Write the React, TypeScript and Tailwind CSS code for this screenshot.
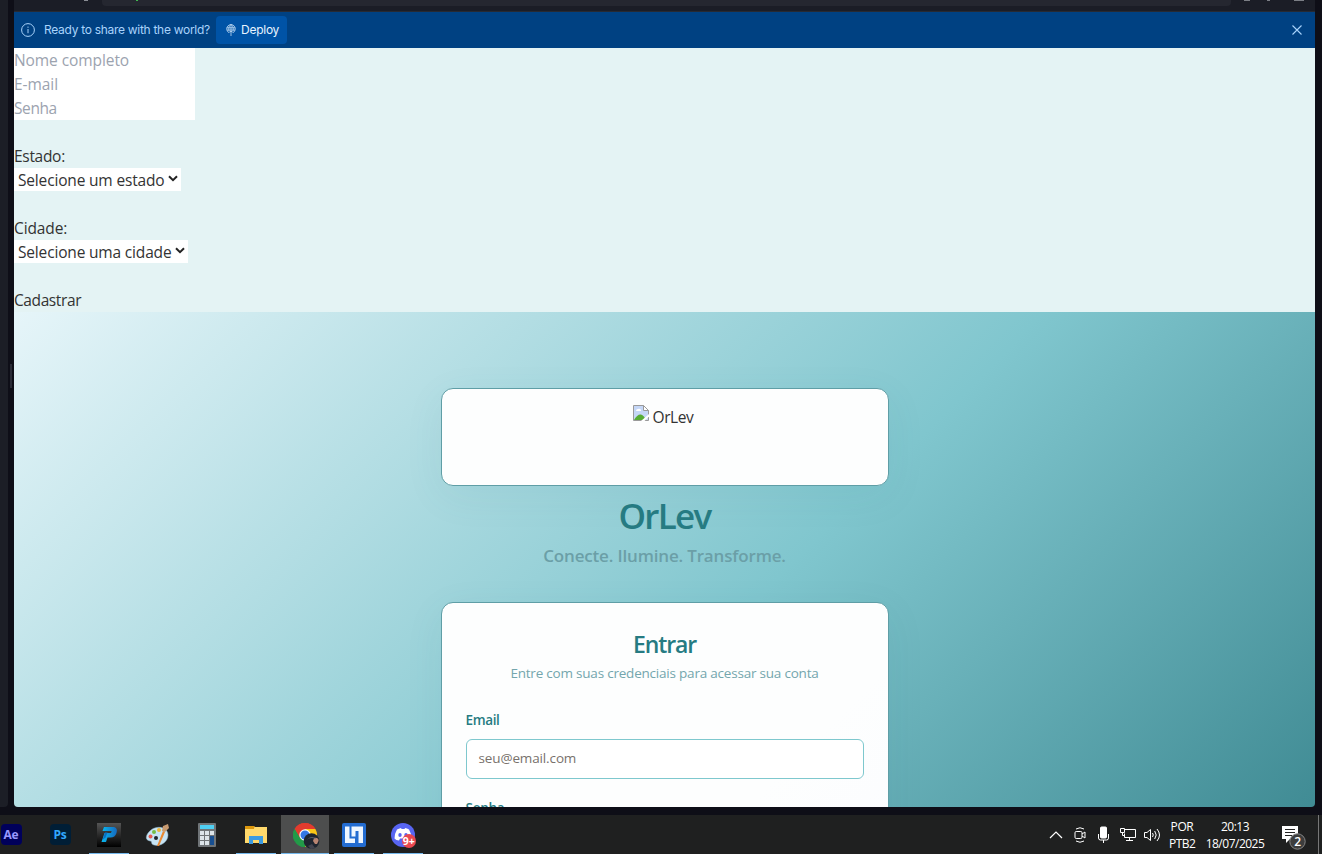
import React from "react";

const segoe = "font-['Open_Sans','Noto_Sans',sans-serif]";

function ShareBanner() {
  return (
    <div className="flex h-9 shrink-0 items-center bg-[#004182] pl-[7px] pr-[13px] font-['Inter',sans-serif] text-[12px]">
      <svg width="14" height="14" viewBox="0 0 14 14" fill="none" stroke="#a9d3fb">
        <circle cx="7" cy="7" r="6.4" />
        <path d="M7 6v4.200M7 3.600v1.200" />
      </svg>
      <span className="ml-[9px] w-[172px] whitespace-nowrap tracking-[-0.29px] text-[#a9d3fb]">Ready to share with the world?</span>
      <button className="flex h-7 w-[71px] items-center rounded bg-[#0053a6] pl-[10px] text-[#e8f3ff]">
        <svg width="10" height="12" viewBox="0 0 10 12" fill="none" stroke="#cfe5fa" strokeWidth="0.75">
          <path d="M3 8.700A4.300 4.300 0 1 1 7 8.700M3.300 7.500C2 4.500 3.400.8 5 .7c1.600.1 3 3.800 1.700 6.800M.9 3.800h8.200M1 6h8M5 .7V12M3.600 8.500 5 7l1.400 1.500" />
        </svg>
        <span className="ml-[5px] tracking-[-0.25px]">Deploy</span>
      </button>
      <svg className="ml-auto" width="10" height="10" viewBox="0 0 10 10" stroke="#a9d3fb" strokeWidth="1.1">
        <path d="m.5.5 9 9m0-9-9 9" />
      </svg>
    </div>
  );
}

function SelectBox({ label, className }: { label: string; className: string }) {
  return (
    <div className={"flex h-[23px] items-center bg-white pl-1 pt-px " + className}>
      <span className="whitespace-nowrap">{label}</span>
      <svg className="mb-[3px] ml-auto mr-[3px] shrink-0" width="10" height="7" viewBox="0 0 10 7" fill="none" stroke="#222" strokeWidth="2">
        <path d="m1 1.200 4 4 4-4" />
      </svg>
    </div>
  );
}

function RegisterForm() {
  return (
    <div className="h-[264px] shrink-0 bg-[#e4f3f4] text-[15.5px] leading-6 text-[#333333]">
      <div className="h-[72px] w-[181px] bg-white text-[#9ca3af]">
        <div className="tracking-[-0.08px]">Nome completo</div>
        <div className="tracking-[-0.05px]">E-mail</div>
        <div className="tracking-[-0.4px]">Senha</div>
      </div>
      <div className="mt-6 tracking-[-0.3px]">Estado:</div>
      <SelectBox label="Selecione um estado" className="w-[167px] tracking-[-0.17px]" />
      <div className="mt-[25px] tracking-[-0.1px]">Cidade:</div>
      <SelectBox label="Selecione uma cidade" className="w-[174px] tracking-[-0.17px]" />
      <div className="mt-[25px] tracking-[-0.4px]">Cadastrar</div>
    </div>
  );
}

function BrokenImage() {
  return (
    <svg className="mt-[16px]" width="16" height="16" viewBox="0 0 16 16">
      <path d="M.5.5h10l5 5v10H.5z" fill="#c5d7f7" stroke="#9a9a9a" />
      <path d="M10.500.5v5h5z" fill="#fff" stroke="#9a9a9a" />
      <path d="M3 6a2 2 0 0 1 2-2 2 2 0 0 1 3 2z" fill="#fff" />
      <path d="M1 15c2-4 5-6 7-5.500s4 3 5 5.500z" fill="#57ad35" />
      <path d="m8 16 8-7v2.500L11.500 16z" fill="#fff" />
    </svg>
  );
}

function LoginSection() {
  return (
    <div className="min-h-0 flex-1 overflow-hidden">
      <div className="flex h-[760px] flex-col items-center bg-[linear-gradient(135deg,#e6f5f9_0%,#80c6ce_50%,#2a7780_100%)] pt-[76px]">
        <div className="flex h-[98px] w-[448px] shrink-0 justify-center rounded-xl border border-[#5f9ea6] bg-[#fdfefe] shadow-[0_10px_40px_rgba(42,120,130,0.07)]">
          <BrokenImage />
          <span className="ml-1 mt-4 mr-[3px] text-[15.5px] leading-6 tracking-[-0.4px] text-[#333333]">OrLev</span>
        </div>
        <h1 className="mt-[10px] text-[35px] font-semibold leading-10 tracking-[-1.7px] text-[#267b82]">OrLev</h1>
        <p className="mt-[6px] text-[17px] font-semibold leading-7 tracking-[-0.17px] text-[#6b9fa7]">Conecte. Ilumine. Transforme.</p>
        <div className="mt-[32px] flex h-[400px] w-[448px] shrink-0 flex-col rounded-xl border border-[#5f9ea6] bg-[linear-gradient(135deg,#fdfefe_0%,#fdfefe_60%,#fafbff_100%)] px-6 pt-[25px] shadow-[0_10px_40px_rgba(42,120,130,0.07)]">
          <h2 className="text-center text-[23px] font-semibold leading-8 tracking-[-1.1px] text-[#267b82]">Entrar</h2>
          <p className="mt-[3px] text-center text-[13.5px] leading-5 tracking-[-0.21px] text-[#74a6ad]">Entre com suas credenciais para acessar sua conta</p>
          <div className="mt-[27px] text-[13.5px] font-semibold leading-5 tracking-[-0.35px] text-[#267b82]">Email</div>
          <div className="mt-[9px] flex h-10 shrink-0 items-center rounded-md border border-[#7ec8ce] bg-white px-3 pb-px text-[13.5px] tracking-[-0.13px] text-[#78716c]">seu@email.com</div>
          <div className="mt-[19px] text-[13.5px] font-semibold leading-5 tracking-[-0.25px] text-[#267b82]">Senha</div>
        </div>
      </div>
    </div>
  );
}

function Slot({ children, className = "" }: { children: React.ReactNode; className?: string }) {
  return <div className={"flex h-[39px] shrink-0 flex-col items-center " + className}>{children}</div>;
}

function Underline() {
  return <div className="mt-auto h-px w-10 bg-[#76b9ed]" />;
}

function TaskIcons() {
  return (
    <div className="flex">
      <Slot className="w-[22px] pt-[9px]">
        <div className="flex h-[21px] w-[21px] items-center justify-center rounded bg-[#00005b] text-[12px] font-bold tracking-[-0.3px] text-[#9999ff]">Ae</div>
      </Slot>
      <Slot className="ml-[27px] w-[22px] pt-[9px]">
        <div className="flex h-[21px] w-[21px] items-center justify-center rounded bg-[#001e36] text-[12px] font-bold tracking-[-0.3px] text-[#31a8ff]">Ps</div>
      </Slot>
      <Slot className="ml-[18px] w-10 pt-2">
        <svg width="24" height="24" viewBox="0 0 24 24">
          <defs>
            <linearGradient id="tile" x2="0" y2="1"><stop stopColor="#555" /><stop offset="1" /></linearGradient>
            <linearGradient id="pblue"><stop stopColor="#08b9ef" /><stop offset="1" stopColor="#166ac0" /></linearGradient>
          </defs>
          <path d="M0 0h24v24H0z" fill="url(#tile)" />
          <path d="M7 4h10q4 1 2.500 6-1.500 4.500-6 4.500h-3L9 19H4.500l3-9H14l.7-2H5.500z" fill="url(#pblue)" />
          <path d="m8 9.500-2.500 7.500 3-2.500 2-5z" fill="#0a6fc4" />
        </svg>
        <Underline />
      </Slot>
      <Slot className="ml-[16px] w-[26px] pt-2">
        <svg width="26" height="24" viewBox="0 0 26 24">
          <path d="M6 7C12 2 23 4 23 12c0 7-8 12-14 10-4-1-1-4-4-4-6-1-4-7 1-11z" fill="#c7e4f4" stroke="#90b6ca" strokeWidth=".5" />
          <circle cx="5.500" cy="13.500" r="2" fill="#e65b50" />
          <circle cx="9" cy="9" r="2" fill="#75bd45" />
          <circle cx="14" cy="7" r="2" fill="#eeb839" />
          <circle cx="11" cy="15" r="2" fill="#20252b" />
          <path d="m12 23 6-15 2 1-6 14z" fill="#e98932" />
          <path d="m17 8 1-5 5-2 1 4-4 4z" fill="#c79a70" />
        </svg>
      </Slot>
      <Slot className="ml-[26px] w-[20px] pt-2">
        <svg width="18" height="24" viewBox="0 0 18 24">
          <rect width="18" height="24" rx="1" fill="#6f7477" />
          <path d="M2 2h14v4H2z" fill="#4fd0f4" />
          <path d="M2 8h4v4H2zm5 0h4v4H7zm5 0h4v4h-4zM2 13h4v4H2zm5 0h4v4H7zM2 18h4v4H2zm5 0h4v4H7z" fill="#dce4e9" />
          <path d="M12 13h4v9h-4z" fill="#174f91" />
        </svg>
      </Slot>
      <Slot className="ml-[19px] w-10 pt-[11px]">
        <svg width="22" height="18" viewBox="0 0 22 18">
          <path d="M0 0h9l1 1h12v16H0z" fill="#f5c245" />
          <path d="M0 0h9v3H0z" fill="#dc970d" />
          <path d="M0 3h9l1-2h12v16H0z" fill="#ffd96c" />
          <path d="M4 10h14v8h-4v-4H8v4H4z" fill="#3c9be1" />
        </svg>
        <Underline />
      </Slot>
      <Slot className="ml-[5px] w-12 bg-[#4d4e4e] pt-2">
        <svg className="ml-[3px]" width="27" height="27" viewBox="0 0 27 27">
          <path d="M12 12 1.600 6A12 12 0 0 1 22.400 6z" fill="#e33b2e" />
          <path d="M12 12V24A12 12 0 0 1 1.600 6z" fill="#229a48" />
          <path d="M12 12V24A12 12 0 0 0 22.400 6H12z" fill="#fbc616" />
          <path d="M12 6h10.400A12 12 0 0 0 1.600 6L6.800 15z" fill="#e33b2e" />
          <path d="M1.600 6A12 12 0 0 0 12 24l5-9H7z" fill="#229a48" />
          <circle cx="12" cy="12" r="5.700" fill="#fff" />
          <circle cx="12" cy="12" r="4.500" fill="#3478e5" />
          <circle cx="18.500" cy="18" r="7.800" fill="#1e2530" />
          <path d="M21 15c3-1 5 1 4.500 3l-1.500 3-2 0-2-3z" fill="#b98572" />
          <path d="M13 18c3-4 7-3 10-2-2-3-7-3-10 2z" fill="#56606f" />
          <path d="m15 23 4-2 3 4-4 1z" fill="#424450" />
        </svg>
        <div className="mt-auto h-px w-12 bg-[#76b9ed]" />
      </Slot>
      <Slot className="ml-[5px] w-10 pt-2">
        <svg width="24" height="24" viewBox="0 0 24 24">
          <rect width="24" height="24" rx="2" fill="#236cd1" />
          <path d="M3 3.500h4.500V15.500H13v4.500H3zM9.500 3.500H21V20h-4.500V8h-3v5.500H9.500z" fill="#eef6ff" />
        </svg>
        <Underline />
      </Slot>
      <Slot className="ml-[9px] w-10 pt-2">
        <svg width="26" height="26" viewBox="0 0 26 26">
          <circle cx="13" cy="12" r="12" fill="#5865f2" />
          <path d="M7 6.500q3-1.500 4-1.500l.6 1h3L15 5q2 0 4 1.500 2.500 4 2.500 9-2 2-4.500 2l-1-2h-6l-1 2q-3 0-4.500-2 0-5 2.500-9z" fill="#fff" />
          <ellipse cx="10" cy="12" rx="1.700" ry="2" fill="#5865f2" />
          <ellipse cx="16" cy="12" rx="1.700" ry="2" fill="#5865f2" />
          <circle cx="19" cy="18" r="7" fill="#e9474f" />
          <text x="12.800" y="21.800" fill="#fff" fontSize="10.500" fontWeight="700" fontFamily="Open Sans">9+</text>
        </svg>
        <Underline />
      </Slot>
    </div>
  );
}

function Tray() {
  return (
    <div className="ml-auto flex h-[39px] items-center text-[12px] text-white">
      <svg className="mr-[11px]" width="14" height="8" viewBox="0 0 14 8" fill="none" stroke="#fff" strokeWidth="1.200">
        <path d="m1 7 6-6 6 6" />
      </svg>
      <svg className="mr-[12px]" width="12" height="16" viewBox="0 0 12 16" fill="none" stroke="#fff">
        <rect x="1" y="4.500" width="7" height="7" rx="1.200" />
        <path d="m8 7 3-2v6L8 9M2 2Q6-.5 10 2M2 14q4 2.500 8 0" />
      </svg>
      <svg className="mr-[11px]" width="11" height="17" viewBox="0 0 11 17" fill="none" stroke="#fff">
        <rect x="2.500" y="1" width="6" height="11" rx="1" fill="#fff" />
        <path d="M.5 8v4q0 2 2 2h6q2 0 2-2V8M5.500 14v3" />
      </svg>
      <svg className="mr-[8px]" width="16" height="15" viewBox="0 0 16 15" fill="none" stroke="#fff">
        <path d="M5 2.500h10.500v8H4.500v-4M9.500 10.500v3M6 13.500h7M.5 1.500h4v4h-4zM2.500 5.500v3h2" />
      </svg>
      <svg className="mr-[8px]" width="17" height="16" viewBox="0 0 17 16" fill="none" stroke="#fff">
        <path d="M.5 5.500H3l3.500-3v11l-3.500-3H.500zM8.500 6q1.500 2 0 4M10.700 4q3 4 0 8M13 2q5 6 0 12" />
      </svg>
      <div className="w-[26px] text-center leading-[17px]">
        <div className="tracking-[-0.4px]">POR</div>
        <div className="tracking-[-0.5px]">PTB2</div>
      </div>
      <div className="ml-[10px] w-[60px] text-center leading-[17px]">
        <div className="tracking-[-0.5px]">20:13</div>
        <div className="whitespace-nowrap tracking-[-0.5px]">18/07/2025</div>
      </div>
      <svg className="ml-[16px] mr-[11px] mt-[7px]" width="26" height="26" viewBox="0 0 26 26">
        <path d="M1 1h16v13H9l-4 4v-4H1z" fill="#fff" />
        <path d="M4 4.500h10M4 7.500h10M4 10.500h7" stroke="#222" />
        <circle cx="16.500" cy="16.500" r="7.700" fill="#3d3d3d" stroke="#858585" />
        <text x="13.200" y="20.700" fill="#fff" fontSize="12" fontWeight="600" fontFamily="Open Sans">2</text>
      </svg>
      <div className="mr-[3px] h-[39px] w-px bg-[#777]" />
    </div>
  );
}

export default function App() {
  return (
    <div className={"flex h-[854px] w-[1322px] flex-col overflow-hidden bg-[#0e0e17] " + segoe}>
      <div className="flex h-[807px] shrink-0">
        <div className="h-[807px] w-2 rounded-br bg-[#1c1e26]" />
        <div className="flex w-[6px] items-center pl-[2px]">
          <div className="mb-[55px] h-6 w-[2px] bg-[#2a2b36]" />
        </div>
        <div className="flex w-[1301px] flex-col overflow-hidden rounded-b">
          <div className="flex h-3 shrink-0 items-start border-b border-[#272a33] bg-[#1b1d26]">
            <div className="ml-[70px] h-px w-1 bg-[#8a8d94]" />
            <div className="ml-[14px] flex h-[6px] w-[1129px] rounded-b bg-[#252730] pl-[34px]">
              <div className="h-px w-[2px] bg-[#3fb950]" />
            </div>
            <div className="ml-[13px] h-px w-[6px] bg-[#7b7e85]" />
            <div className="ml-[17px] h-px w-[3px] bg-[#7b7e85]" />
            <div className="ml-[24px] h-px w-[10px] bg-[#7b7e85]" />
          </div>
          <ShareBanner />
          <RegisterForm />
          <LoginSection />
        </div>
      </div>
      <div className="mt-2 flex h-[39px] bg-[#1f2020]">
        <TaskIcons />
        <Tray />
      </div>
    </div>
  );
}
